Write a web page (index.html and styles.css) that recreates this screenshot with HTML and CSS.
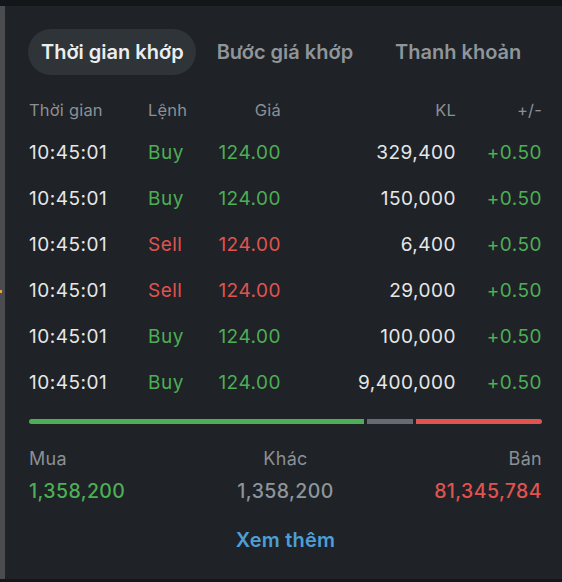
FILE: index.html
```html
<!DOCTYPE html>
<html lang="vi">
<head>
<meta charset="utf-8">
<link rel="stylesheet" href="styles.css">
</head>
<body>
<div class="frame">
  <div class="topstrip"></div>
  <div class="main">
    <div class="sidestrip"><span class="dot"></span></div>
    <section class="panel">
      <nav class="tabs">
        <span class="tab active">Thời gian khớp</span>
        <span class="tab t2">Bước giá khớp</span>
        <span class="tab t3">Thanh khoản</span>
      </nav>
      <div class="grid head">
        <span>Thời gian</span><span>Lệnh</span><span class="r">Giá</span><span class="r">KL</span><span class="r">+/-</span>
      </div>
      <div class="grid row"><span>10:45:01</span><span class="up">Buy</span><span class="r up">124.00</span><span class="r">329,400</span><span class="r up">+0.50</span></div>
      <div class="grid row"><span>10:45:01</span><span class="up">Buy</span><span class="r up">124.00</span><span class="r">150,000</span><span class="r up">+0.50</span></div>
      <div class="grid row"><span>10:45:01</span><span class="down">Sell</span><span class="r down">124.00</span><span class="r">6,400</span><span class="r up">+0.50</span></div>
      <div class="grid row"><span>10:45:01</span><span class="down">Sell</span><span class="r down">124.00</span><span class="r">29,000</span><span class="r up">+0.50</span></div>
      <div class="grid row"><span>10:45:01</span><span class="up">Buy</span><span class="r up">124.00</span><span class="r">100,000</span><span class="r up">+0.50</span></div>
      <div class="grid row"><span>10:45:01</span><span class="up">Buy</span><span class="r up">124.00</span><span class="r">9,400,000</span><span class="r up">+0.50</span></div>
      <div class="bar">
        <span class="seg g" style="flex-basis:335px"></span>
        <span class="seg n" style="flex-basis:46px"></span>
        <span class="seg s" style="flex:1"></span>
      </div>
      <div class="summary">
        <div class="col left"><span class="lbl">Mua</span><span class="val up">1,358,200</span></div>
        <div class="col mid"><span class="lbl">Khác</span><span class="val neutral">1,358,200</span></div>
        <div class="col right"><span class="lbl">Bán</span><span class="val down">81,345,784</span></div>
      </div>
      <div class="more">Xem thêm</div>
    </section>
  </div>
  <div class="bottomstrip"></div>
</div>
</body>
</html>
```
FILE: styles.css
```css
* { box-sizing: border-box; }
html, body { margin: 0; padding: 0; background: #1f2226; }
body { font-family: Inter, "Noto Sans", sans-serif; color: #e6e7e8; width: 562px; height: 582px; overflow: hidden; }
.frame { display: flex; flex-direction: column; height: 582px; }
.topstrip { height: 6px; background: #14171a; flex: none; }
.bottomstrip { height: 3px; background: #14171a; flex: none; }
.main { flex: 1; display: flex; }
.sidestrip { width: 5px; background: #4a4c4f; position: relative; flex: none; }
.dot { position: absolute; left: 0; top: 284px; width: 2px; height: 3px; background: #e8a33a; }
.panel { flex: 1; padding: 23px 20px 0 24px; background: #1f2226; }
.tabs { display: flex; align-items: center; margin-left: -1px; }
.tab { height: 46px; display: flex; align-items: center; padding: 0 12px 0 13px; border-radius: 23px; font-size: 20px; font-weight: 600; color: #8e959b; letter-spacing: 0; }
.tab.active { background: #2e3438; color: #ecedee; }
.tab.t2 { margin-left: 8px; }
.tab.t3 { margin-left: 17px; }
.grid { display: grid; grid-template-columns: 119px 60px 73px 1fr 86px; align-items: center; }
.grid .r { text-align: right; }
.head { height: 39px; margin-top: 15px; font-size: 16.5px; letter-spacing: 0.2px; color: #8a9096; }
.row { height: 46px; font-size: 19px; letter-spacing: 0.5px; color: #e6e7e8; }
.up { color: #4cae55; }
.down { color: #e0534f; }
.neutral { color: #8e959b; }
.bar { display: flex; gap: 3px; margin-top: 14px; height: 5px; }
.seg { height: 5px; flex-shrink: 0; }
.seg.g { background: #4cae55; border-radius: 3px 0 0 3px; }
.seg.n { background: #646b72; }
.seg.s { background: #e0534f; border-radius: 0 3px 3px 0; }
.summary { display: grid; grid-template-columns: 1fr auto 1fr; margin-top: 24px; }
.col { display: flex; flex-direction: column; gap: 10px; }
.col.mid { align-items: center; }
.col.right { align-items: flex-end; }
.lbl { font-size: 18px; letter-spacing: 0.3px; color: #8a9096; line-height: 22px; }
.val { font-size: 19.5px; letter-spacing: 0.4px; font-weight: 500; line-height: 22px; }
.more { text-align: center; margin-top: 26px; font-size: 20px; font-weight: 600; color: #4e9ed6; line-height: 24px; letter-spacing: 0.2px; }
```
